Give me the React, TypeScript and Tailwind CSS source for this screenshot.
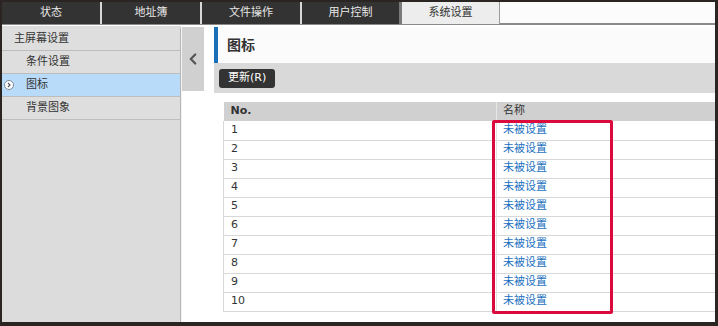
import { ChevronLeft } from 'lucide-react';

const tabs = ['状态', '地址簿', '文件操作'];
const menu = [
  { label: '主屏幕设置', indent: false, active: false },
  { label: '条件设置', indent: true, active: false },
  { label: '图标', indent: true, active: true },
  { label: '背景图象', indent: true, active: false },
];
const rows = Array.from({ length: 10 }, (_, i) => i + 1);

const font = { fontFamily: '"DejaVu Sans", "Noto Sans CJK SC", sans-serif' };

export default function App() {
  return (
    <div
      className="w-[718px] h-[326px] bg-[#2a2422] pt-[2px] pl-[2px] pr-[3px] pb-[4px] overflow-hidden"
      style={font}
    >
      <div className="h-full flex flex-col bg-white">
        {/* Tabs */}
        <div className="flex h-[22px] shrink-0">
          {tabs.map(t => (
            <div
              key={t}
              className="w-[100px] bg-[#333333] border-r-2 border-[#d8d8d8] flex items-center justify-center text-[11px] text-[#e8e8e8]"
            >
              {t}
            </div>
          ))}
          <div className="w-[100px] bg-[#333333] border-r-[3px] border-[#7a7a7a] flex items-center justify-center text-[11px] text-[#e8e8e8]">
            用户控制
          </div>
          <div className="w-[98px] bg-[#ededed] border-r border-[#9a9a9a] flex items-center justify-center text-[11px] text-[#333]">
            系统设置
          </div>
          <div className="flex-1 bg-[#fcfcfc] border-b border-[#8a8a8a]" />
        </div>

        {/* Body */}
        <div className="flex flex-1 min-h-0 border-t border-[#8a8a8a] pt-[1px]">
          {/* Sidebar */}
          <div className="w-[180px] shrink-0 bg-[#dcdcdc] border-r border-[#f4f4f4] flex flex-col pt-[2px]">
            {menu.map(m => (
              <div
                key={m.label}
                className={`relative h-[23px] flex items-center text-[11px] text-[#333] border-b border-[#bdbdbd] border-r border-r-[#b5b5b5] ${
                  m.active ? 'bg-[#b9dbfa]' : 'bg-[#dedede]'
                } ${m.indent ? 'pl-[24px]' : 'pl-[12px]'}`}
              >
                {m.active && (
                  <span className="absolute left-[2px] top-[6px] w-[10px] h-[10px] rounded-full bg-white border border-[#7a8a9a] flex items-center justify-center">
                    <svg width="6" height="6" viewBox="0 0 6 6">
                      <path d="M2 1 L4 3 L2 5" fill="none" stroke="#556" strokeWidth="1.2" />
                    </svg>
                  </span>
                )}
                {m.label}
              </div>
            ))}
            <div className="flex-1 border-r border-[#b5b5b5]" />
          </div>

          {/* Collapse */}
          <div className="w-[22px] shrink-0 pt-[1px]">
            <div className="h-[64px] bg-[#d0d0d0] flex items-center justify-center">
              <ChevronLeft size={18} strokeWidth={3} color="#555" />
            </div>
          </div>

          {/* Main */}
          <div className="flex-1 min-w-0 pl-[10px] pt-[1px]">
            <div className="h-[36px] bg-[#fbfbfb] border-l-[4px] border-[#1a6fb8] flex items-center pl-[9px] text-[14px] font-bold text-[#333]">
              图标
            </div>
            <div className="h-[30px] bg-[#d9d9d9] flex items-center pl-[5px]">
              <button className="h-[19px] px-[9px] rounded-[3px] bg-[#333333] text-[11px] text-white">
                更新(R)
              </button>
            </div>

            <div className="pl-[9px] pt-[9px]">
              <div className="relative">
                <table className="w-full border-collapse text-[11px] text-[#333]">
                  <thead>
                    <tr className="h-[19px] bg-[#d0d0d0]">
                      <th className="w-[273px] text-left font-bold pl-[7px] border-r border-[#e6e6e6]">No.</th>
                      <th className="text-left font-normal pl-[6px]">名称</th>
                    </tr>
                  </thead>
                  <tbody>
                    {rows.map(n => (
                      <tr key={n} className="h-[19px] border-b border-[#d8d8d8]">
                        <td className="pl-[7px] border-l border-[#d8d8d8] border-r border-r-[#e2e2e2]">{n}</td>
                        <td className="pl-[6px] text-[#1a6fc0]">未被设置</td>
                      </tr>
                    ))}
                  </tbody>
                </table>
                <div className="absolute left-[269px] top-[18px] w-[121px] h-[194px] border-[3px] border-[#dc0a3c] rounded-[2px] pointer-events-none" />
              </div>
            </div>
          </div>
        </div>
      </div>
    </div>
  );
}
